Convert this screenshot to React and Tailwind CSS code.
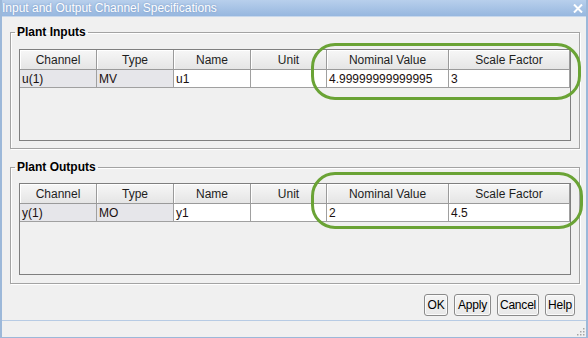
import React from "react";

const cols = [
  { name: "Channel", w: "w-[77px]" },
  { name: "Type", w: "w-[77px]" },
  { name: "Name", w: "w-[77px]" },
  { name: "Unit", w: "w-[76px]" },
  { name: "Nominal Value", w: "w-[122px]" },
  { name: "Scale Factor", w: "w-[121px]" },
];

function Table({ row }) {
  return (
    <div className="w-[552px] h-[92px] border border-[#7f7f7f] bg-[#f0f0f0]">
      <div className="flex h-[20px]">
        {cols.map((c, i) => (
          <div
            key={i}
            className={`${c.w} h-[20px] flex items-center justify-center border-r border-b border-[#9a9a9a] bg-gradient-to-b from-[#f7f7f7] to-[#e5e5e5] shadow-[inset_1px_1px_0_#ffffff] text-[12px] text-[#1e1e1e]`}
          >
            {c.name}
          </div>
        ))}
      </div>
      <div className="flex h-[18px]">
        {row.map((v, i) => (
          <div
            key={i}
            className={`${cols[i].w} h-[18px] flex items-center pl-[2px] border-r border-b border-[#a0a0a0] text-[12px] text-[#1a1010] ${
              i < 2 ? "bg-[#e6e6ea]" : "bg-white"
            }`}
          >
            {v}
          </div>
        ))}
      </div>
    </div>
  );
}

function Group({ title, row, legendGap }) {
  return (
    <fieldset className="relative w-[569px] h-[124px] border border-[#a3a3a3] shadow-[inset_1px_1px_0_#ffffff,1px_1px_0_#ffffff] px-[8px]">
      <legend className="-ml-[4px] px-[2px] text-[12px] leading-[14px] font-bold text-black">
        {title}
      </legend>
      <div className={legendGap}>
        <Table row={row} />
      </div>
    </fieldset>
  );
}

function Btn({ children, w }) {
  return (
    <div
      className={`${w} h-[22px] flex items-center justify-center rounded-[3px] border border-[#8a8a8a] bg-gradient-to-b from-[#f4f4f4] to-[#e8e8e8] shadow-[inset_0_0_0_1px_#fbfbfb] text-[12px] tracking-[-0.2px] text-black`}
    >
      {children}
    </div>
  );
}

export default function App() {
  return (
    <div
      className="relative w-[588px] h-[338px] overflow-hidden bg-[#f0f0f0] border-x-2 border-b border-[#9cb8d9] flex flex-col"
      style={{ fontFamily: '"Liberation Sans", Arial, sans-serif' }}
    >
      {/* Title bar */}
      <div className="h-[17px] -mx-[2px] flex items-center justify-between bg-gradient-to-b from-[#b8cfec] to-[#97b7df] border-b border-[#c8d8ec]">
        <span className="pl-[2px] text-[12px] leading-[16px] text-white [text-shadow:0_0_2px_#6f8fbf]">
          Input and Output Channel Specifications
        </span>
        <svg width="10" height="9" viewBox="0 0 10 9" className="mr-[5px]">
          <path d="M1 0.5 L9 8.5 M9 0.5 L1 8.5" stroke="#ffffff" strokeWidth="2" />
        </svg>
      </div>

      <div className="flex flex-col pl-[8px] pt-[8px]">
        <Group
          title="Plant Inputs"
          row={["u(1)", "MV", "u1", "", "4.99999999999995", "3"]}
          legendGap="mt-[10px]"
        />
        <div className="h-[11px]" />
        <Group
          title="Plant Outputs"
          row={["y(1)", "MO", "y1", "", "2", "4.5"]}
          legendGap="mt-[9px]"
        />
      </div>

      <div className="flex justify-end gap-[6px] pr-[11px] mt-[10px]">
        <Btn w="w-[24px]">OK</Btn>
        <Btn w="w-[37px]">Apply</Btn>
        <Btn w="w-[42px]">Cancel</Btn>
        <Btn w="w-[30px]">Help</Btn>
      </div>

      <div className="mt-auto h-[17px] border-t border-[#b7cbe4] relative">
        <svg width="10" height="10" viewBox="0 0 10 10" className="absolute right-[1px] bottom-[1px]">
          {[[8, 2], [5, 5], [8, 5], [2, 8], [5, 8], [8, 8]].map(([x, y], i) => (
            <rect key={i} x={x} y={y} width="1.5" height="1.5" fill="#a6a6a6" />
          ))}
        </svg>
      </div>

      {/* Green highlight annotations */}
      <div className="absolute left-[309px] top-[43px] w-[270px] h-[57px] rounded-[24px] border-[3px] border-[#6aa335]" />
      <div className="absolute left-[309px] top-[172px] w-[272px] h-[57px] rounded-[24px] border-[3px] border-[#6aa335]" />
    </div>
  );
}
